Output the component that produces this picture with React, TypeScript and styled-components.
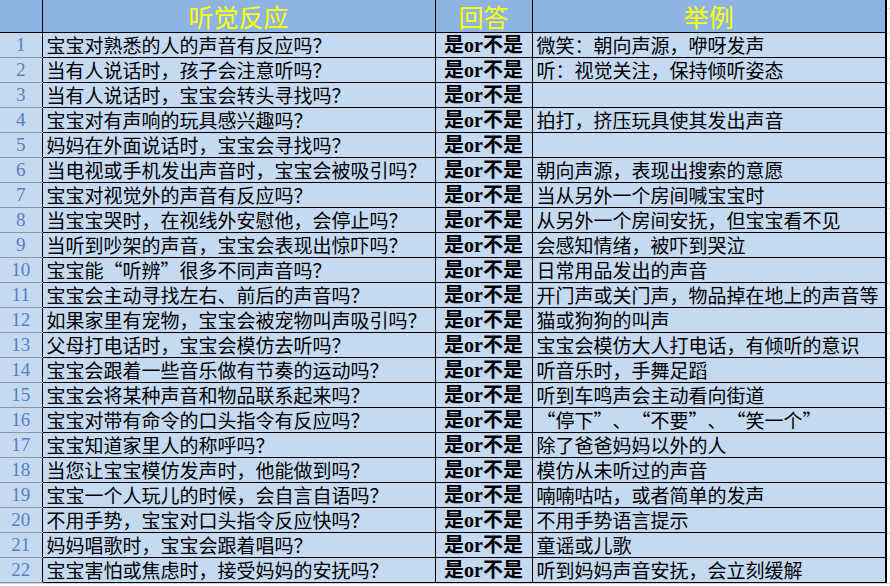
import React from 'react';
import styled, { createGlobalStyle } from 'styled-components';

const colors = {
  header: '#8db4e2',
  row: '#c5d9f1',
  line: '#000000',
  indexLine: '#8a96a8',
  indexText: '#5a7ec0',
  title: '#ffff00',
};

const GlobalStyle = createGlobalStyle`
  html, body {
    margin: 0;
    padding: 0;
    background: #ffffff;
  }
  body {
    font-family: "Noto Sans CJK SC", "Liberation Sans", sans-serif;
  }
`;

const Page = styled.div`
  width: 890px;
  height: 586px;
  overflow: hidden;
  background-color: #ffffff;
  background-image: linear-gradient(#d4d4d4 1px, transparent 1px);
  background-size: 100% 25px;
  background-position: 0 8px;
`;

const Table = styled.table`
  border-collapse: collapse;
  table-layout: fixed;
  width: 886px;
  background-color: ${colors.row};
`;

const HeadCell = styled.th`
  height: 32px;
  padding: 0;
  background-color: ${colors.header};
  color: ${colors.title};
  font-family: "Noto Sans CJK SC", sans-serif;
  font-weight: 400;
  font-size: 25px;
  line-height: 32px;
  text-align: center;
  vertical-align: middle;
  border-bottom: 1px solid ${colors.line};
  border-right: 1px solid ${colors.line};
  &:last-child {
    border-right: 2px solid ${colors.line};
  }
`;

type Kind = 'index' | 'question' | 'answer' | 'example';

const fontFor = (kind: Kind) => {
  if (kind === 'index') return '"Liberation Serif", serif';
  if (kind === 'answer') return '"Liberation Serif", "Noto Sans CJK SC", serif';
  return '"Noto Sans CJK SC", sans-serif';
};

const Cell = styled.td<{ $kind: Kind }>`
  height: 24px;
  padding: 0 0 0 ${({ $kind }) => ($kind === 'question' || $kind === 'example' ? '4px' : '0')};
  white-space: nowrap;
  overflow: hidden;
  line-height: 24px;
  text-spacing-trim: space-all;
  border-bottom: 1px solid
    ${({ $kind }) => ($kind === 'index' ? colors.indexLine : colors.line)};
  border-right: 1px solid ${colors.line};
  text-align: ${({ $kind }) => ($kind === 'index' || $kind === 'answer' ? 'center' : 'left')};
  color: ${({ $kind }) => ($kind === 'index' ? colors.indexText : '#000000')};
  font-family: ${({ $kind }) => fontFor($kind)};
  font-size: ${({ $kind }) => ($kind === 'answer' ? '20px' : '19px')};
  font-weight: ${({ $kind }) => ($kind === 'answer' ? 700 : 400)};
  font-feature-settings: ${({ $kind }) =>
    $kind === 'question' || $kind === 'example' ? '"fwid" 1' : 'normal'};
  &:last-child {
    border-right: 2px solid ${colors.line};
  }
`;

const rows: Array<[string, string]> = [
  ['宝宝对熟悉的人的声音有反应吗？', '微笑：朝向声源，咿呀发声'],
  ['当有人说话时，孩子会注意听吗？', '听：视觉关注，保持倾听姿态'],
  ['当有人说话时，宝宝会转头寻找吗？', ''],
  ['宝宝对有声响的玩具感兴趣吗？', '拍打，挤压玩具使其发出声音'],
  ['妈妈在外面说话时，宝宝会寻找吗？', ''],
  ['当电视或手机发出声音时，宝宝会被吸引吗？', '朝向声源，表现出搜索的意愿'],
  ['宝宝对视觉外的声音有反应吗？', '当从另外一个房间喊宝宝时'],
  ['当宝宝哭时，在视线外安慰他，会停止吗？', '从另外一个房间安抚，但宝宝看不见'],
  ['当听到吵架的声音，宝宝会表现出惊吓吗？', '会感知情绪，被吓到哭泣'],
  ['宝宝能“听辨”很多不同声音吗？', '日常用品发出的声音'],
  ['宝宝会主动寻找左右、前后的声音吗？', '开门声或关门声，物品掉在地上的声音等'],
  ['如果家里有宠物，宝宝会被宠物叫声吸引吗？', '猫或狗狗的叫声'],
  ['父母打电话时，宝宝会模仿去听吗？', '宝宝会模仿大人打电话，有倾听的意识'],
  ['宝宝会跟着一些音乐做有节奏的运动吗？', '听音乐时，手舞足蹈'],
  ['宝宝会将某种声音和物品联系起来吗？', '听到车鸣声会主动看向街道'],
  ['宝宝对带有命令的口头指令有反应吗？', '“停下”、“不要”、“笑一个”'],
  ['宝宝知道家里人的称呼吗？', '除了爸爸妈妈以外的人'],
  ['当您让宝宝模仿发声时，他能做到吗？', '模仿从未听过的声音'],
  ['宝宝一个人玩儿的时候，会自言自语吗？', '喃喃咕咕，或者简单的发声'],
  ['不用手势，宝宝对口头指令反应快吗？', '不用手势语言提示'],
  ['妈妈唱歌时，宝宝会跟着唱吗？', '童谣或儿歌'],
  ['宝宝害怕或焦虑时，接受妈妈的安抚吗？', '听到妈妈声音安抚，会立刻缓解'],
];

const App = () => (
  <>
    <GlobalStyle />
    <Page>
      <Table>
        <colgroup>
          <col style={{ width: 42 }} />
          <col style={{ width: 393 }} />
          <col style={{ width: 97 }} />
          <col style={{ width: 354 }} />
        </colgroup>
        <thead>
          <tr>
            <HeadCell />
            <HeadCell>听觉反应</HeadCell>
            <HeadCell>回答</HeadCell>
            <HeadCell>举例</HeadCell>
          </tr>
        </thead>
        <tbody>
          {rows.map(([question, example], i) => (
            <tr key={question}>
              <Cell $kind="index">{i + 1}</Cell>
              <Cell $kind="question">{question}</Cell>
              <Cell $kind="answer">是or不是</Cell>
              <Cell $kind="example">{example}</Cell>
            </tr>
          ))}
        </tbody>
      </Table>
    </Page>
  </>
);

export default App;
